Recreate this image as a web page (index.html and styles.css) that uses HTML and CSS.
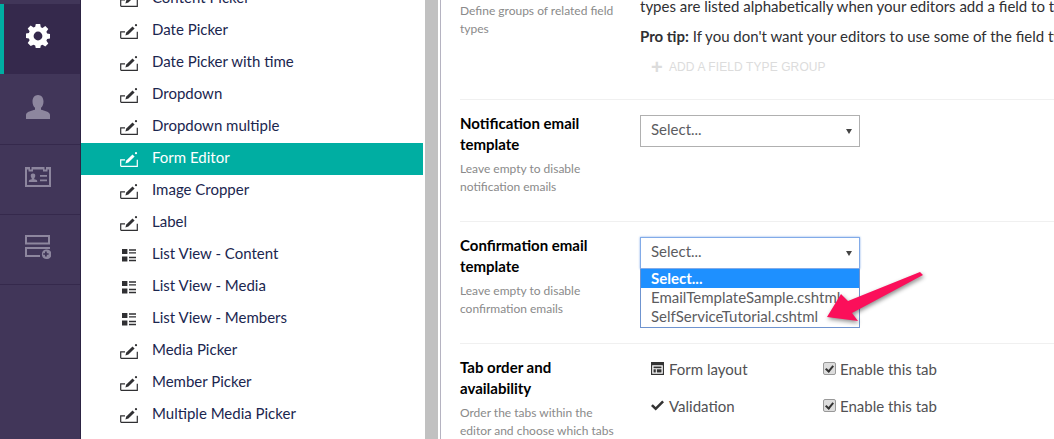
FILE: index.html
```html
<!DOCTYPE html>
<html lang="en">
<head>
    <meta charset="UTF-8">
    <title>Form Editor</title>
    <link rel="stylesheet" href="styles.css">
</head>
<body>
    <svg class="icon-defs" width="0" height="0">
        <symbol id="editor" viewBox="0 0 18 15">
            <path d="M.7 14.300V7.800H5M.7 14.300h16.600V7.800" fill="none" stroke="currentColor" stroke-width="1.200" />
            <path d="M5.400 11.400l.9-3 6.200-6 2.100 2.100-6.200 6z" fill="currentColor" />
            <circle cx="16" cy="1.200" r="1.100" fill="currentColor" />
        </symbol>
        <symbol id="listview" viewBox="0 0 14 13">
            <path d="M0 0h5.400v5H0zM0 7.500h5.400v5H0zM7 .3h7v1.400H7zM7 3.200h7v1.400H7zM7 7.800h7v1.400H7zM7 10.800h7v1.400H7z" fill="currentColor" />
        </symbol>
    </svg>

    <nav class="sections">
        <div class="section-item active">
            <svg class="section-icon" viewBox="0 0 24 24"><path fill-rule="evenodd" d="M9.800 0h4.400l.6 3.200 1.700.7L19.300 2l3 3.100-1.900 2.700.7 1.700 2.900.6v4.400l-2.900.6-.7 1.700 1.900 2.700-3 3-2.800-1.800-1.700.7-.6 3H9.800l-.6-3-1.700-.7L4.700 22l-3-3 1.900-2.700-.7-1.700-2.900-.6V9.600l2.900-.6.7-1.700-1.900-2.700 3-3.100 2.800 1.900 1.700-.7zM12 7.600a4.400 4.400 0 1 0 0 8.800 4.400 4.400 0 0 0 0-8.800z" /></svg>
        </div>
        <div class="section-item">
            <svg class="section-icon" viewBox="0 0 24 24"><path d="M12 0c3.300 0 5.500 2.800 5.500 6.500 0 2.700-1 5-2.500 6.300v2c3 .8 9 2 9 5.200V24H0v-4c0-3.200 6-4.400 9-5.200v-2C7.500 11.500 6.500 9.200 6.500 6.500 6.500 2.800 8.700 0 12 0z" /></svg>
        </div>
        <div class="section-item">
            <svg class="section-icon" viewBox="0 0 26 20"><path fill-rule="evenodd" d="M0 0h5v2.500h1.500V0h13v2.500H21V0h5v20H0zM2 2.500V18h22V2.500h-1.500v2H18v-2H8v2H3.500v-2z" /><path d="M8 6.500a2.200 2.200 0 0 1 2.200 2.600c0 1-.5 1.800-1 2.300v.8c1.300.3 3 .7 3 1.800v1H3.800v-1c0-1.100 1.700-1.500 3-1.800v-.8c-.5-.5-1-1.300-1-2.300A2.200 2.200 0 0 1 8 6.500zM15 8h7v1.800h-7zM15 12.500h7v1.800h-7z" /></svg>
        </div>
        <div class="section-item">
            <svg class="section-icon" viewBox="0 0 26 24"><path fill-rule="evenodd" d="M0 0h25v9.500H0zM2 2v5.500h21V2zM0 12h25v2H2v6h13v2H0z" /><path fill-rule="evenodd" d="M21 14.500a4.800 4.800 0 1 1 0 9.500 4.800 4.800 0 0 1 0-9.500zM20 16.500v1.800h-1.800v1.500H20v1.800h1.800v-1.800h1.800v-1.500h-1.800v-1.800z" /></svg>
        </div>
    </nav>

    <aside class="tree">
        <ul class="tree-list">
            <li class="tree-row"><svg class="tree-icon"><use href="#editor" /></svg>Content Picker</li>
            <li class="tree-row"><svg class="tree-icon"><use href="#editor" /></svg>Date Picker</li>
            <li class="tree-row"><svg class="tree-icon"><use href="#editor" /></svg>Date Picker with time</li>
            <li class="tree-row"><svg class="tree-icon"><use href="#editor" /></svg>Dropdown</li>
            <li class="tree-row"><svg class="tree-icon"><use href="#editor" /></svg>Dropdown multiple</li>
            <li class="tree-row selected"><svg class="tree-icon"><use href="#editor" /></svg>Form Editor</li>
            <li class="tree-row"><svg class="tree-icon"><use href="#editor" /></svg>Image Cropper</li>
            <li class="tree-row"><svg class="tree-icon"><use href="#editor" /></svg>Label</li>
            <li class="tree-row"><svg class="tree-icon small"><use href="#listview" /></svg>List View - Content</li>
            <li class="tree-row"><svg class="tree-icon small"><use href="#listview" /></svg>List View - Media</li>
            <li class="tree-row"><svg class="tree-icon small"><use href="#listview" /></svg>List View - Members</li>
            <li class="tree-row"><svg class="tree-icon"><use href="#editor" /></svg>Media Picker</li>
            <li class="tree-row"><svg class="tree-icon"><use href="#editor" /></svg>Member Picker</li>
            <li class="tree-row"><svg class="tree-icon"><use href="#editor" /></svg>Multiple Media Picker</li>
        </ul>
    </aside>

    <div class="splitter"></div>

    <main class="editor">
        <section class="prop first">
            <div class="prop-label">
                <p class="prop-desc">Define groups of related field types</p>
            </div>
            <div class="prop-field">
                <p class="copy">types are listed alphabetically when your editors add a field to the form.</p>
                <p class="copy tip"><strong>Pro tip:</strong> If you don't want your editors to use some of the field types, put them in a group.</p>
                <div class="add-group"><span class="add-plus">+</span>ADD A FIELD TYPE GROUP</div>
            </div>
        </section>

        <section class="prop">
            <div class="prop-label">
                <h4>Notification email template</h4>
                <p class="prop-desc">Leave empty to disable notification emails</p>
            </div>
            <div class="prop-field">
                <div class="select-box"><span>Select...</span><i class="caret"></i></div>
            </div>
        </section>

        <section class="prop">
            <div class="prop-label">
                <h4>Confirmation email template</h4>
                <p class="prop-desc">Leave empty to disable confirmation emails</p>
            </div>
            <div class="prop-field">
                <div class="select-box focused"><span>Select...</span><i class="caret"></i></div>
                <ul class="select-menu">
                    <li class="highlight">Select...</li>
                    <li>EmailTemplateSample.cshtml</li>
                    <li>SelfServiceTutorial.cshtml</li>
                </ul>
            </div>
        </section>

        <section class="prop">
            <div class="prop-label">
                <h4>Tab order and availability</h4>
                <p class="prop-desc">Order the tabs within the editor and choose which tabs</p>
            </div>
            <div class="prop-field tabs">
                <div class="tab-row">
                    <div class="tab-name">
                        <svg class="tab-icon" viewBox="0 0 13 13"><path fill-rule="evenodd" d="M0 0h13v13H0zM1.200 3.300v8.500h10.600V3.300zM2.500 4.500h8v1.800h-8zM2.500 7.300h2.300v3.200H2.500zM5.800 7.300h4.700v3.200H5.800z" /></svg>
                        Form layout
                    </div>
                    <label class="tab-check"><span class="checkbox"></span>Enable this tab</label>
                </div>
                <div class="tab-row">
                    <div class="tab-name">
                        <svg class="tab-icon" viewBox="0 0 13 13"><path d="M0 7l1.800-1.800 2.900 2.900L11.200 1.500 13 3.300 4.700 11.600z" /></svg>
                        Validation
                    </div>
                    <label class="tab-check"><span class="checkbox"></span>Enable this tab</label>
                </div>
                <div class="tab-row last">
                    <div class="tab-name">
                        <svg class="tab-icon" viewBox="0 0 13 13"><circle cx="6.500" cy="6.500" r="5" /></svg>
                        Actions
                    </div>
                    <label class="tab-check"><span class="checkbox"></span>Enable this tab</label>
                </div>
            </div>
        </section>
    </main>

    <svg class="callout" viewBox="0 0 1054 439" width="1054" height="439">
        <polygon points="920,272 923,275 852,313 858,321 827,317 841,294 848,301" />
    </svg>
</body>
</html>
```

FILE: styles.css
```css
/* page */
html, body {
    margin: 0;
    padding: 0;
}

body {
    display: flex;
    height: 439px;
    overflow: hidden;
    position: relative;
    background-color: white;
    font-family: Lato, sans-serif;
    font-size: 15px;
    color: #303033;
}

.icon-defs {
    position: absolute;
}

ul {
    list-style: none;
    margin: 0;
    padding: 0;
}

/* left section bar */
.sections {
    flex: 0 0 80px;
    background-color: #413659;
    border-right: 1px solid #2d2444;
    padding-top: 4px;
}

.section-item {
    height: 63px;
    padding: 0 4px 6px 0;
    border-bottom: 1px solid #35294c;
    display: flex;
    align-items: center;
    justify-content: center;
    color: #8d869e;
}

.section-item.active {
    height: 64px;
    border-bottom: none;
    border-left: 4px solid #00aea2;
    background-color: #35294c;
    color: white;
    padding-right: 8px;
    margin-bottom: 1px;
}

.section-icon {
    width: 26px;
    height: 24px;
    fill: currentColor;
}

/* tree of field types */
.tree {
    flex: 0 0 342px;
    overflow: hidden;
}

.tree-list {
    margin-top: -17px;
}

.tree-row {
    height: 32px;
    box-sizing: border-box;
    display: flex;
    align-items: center;
    padding: 0 0 4px 39px;
    color: #1b264f;
}

.tree-row.selected {
    background-color: #00aea2;
    color: white;
}

.tree-icon {
    width: 18px;
    height: 15px;
    margin-right: 14px;
    margin-top: 4px;
    color: #303033;
}

.tree-icon.small {
    width: 14px;
    height: 13px;
    margin-left: 2px;
    margin-right: 16px;
}

.selected .tree-icon {
    color: white;
}

/* grey bar between tree and editor */
.splitter {
    flex: 0 0 13px;
    margin: 0 2px;
    background-color: #c1c1c1;
}

/* editor panel */
.editor {
    flex: 1;
    min-width: 0;
    border-left: 1px solid #b5b3c1;
    padding-left: 19px;
}

.prop {
    display: flex;
    gap: 20px;
    height: 122px;
    box-sizing: border-box;
    padding-top: 13px;
    border-bottom: 1px solid #f0f0f0;
}

.prop.first {
    height: 100px;
    padding-top: 0;
}

.prop:last-child {
    border-bottom: none;
}

.prop-label {
    flex: 0 0 160px;
}

.prop-label h4 {
    margin: 0 0 5px;
    font-size: 15px;
    line-height: 21px;
    font-weight: 700;
    color: #000;
}

.prop-desc {
    margin: 0;
    font-size: 12px;
    line-height: 18px;
    color: #8a8a8a;
}

.first .prop-desc {
    margin-top: 2px;
}

.prop-field {
    flex: 1;
    min-width: 0;
    position: relative;
}

.copy {
    margin: 0;
    white-space: nowrap;
    line-height: 21px;
}

.first .copy:first-child {
    margin-top: -4px;
}

.tip {
    margin-top: 9px;
}

.add-group {
    display: flex;
    align-items: center;
    height: 18px;
    margin-top: 11px;
    padding-left: 11px;
    font-family: "Liberation Sans", sans-serif;
    font-size: 12px;
    letter-spacing: 0.1px;
    color: #dcdcdc;
}

.add-plus {
    width: 18px;
    font-size: 20px;
    font-weight: 700;
    line-height: 18px;
}

/* fake selects */
.select-box {
    width: 220px;
    height: 32px;
    margin-top: 2px;
    box-sizing: border-box;
    border: 1px solid #b0b0b0;
    padding: 0 7px 4px 10px;
    display: flex;
    align-items: center;
    justify-content: space-between;
    color: #5c5c5f;
}

.select-box.focused {
    border-color: #82abe8;
    box-shadow: 0 0 2px #82abe8;
}

.caret {
    width: 0;
    height: 0;
    margin-top: 4px;
    border-left: 3px solid transparent;
    border-right: 3px solid transparent;
    border-top: 5px solid #444;
}

.select-menu {
    position: absolute;
    top: 34px;
    left: 0;
    z-index: 2;
    width: 220px;
    height: 59px;
    box-sizing: border-box;
    border: 1px solid #6f94cf;
    border-top: none;
    background-color: white;
    color: #5c5c5f;
    overflow: hidden;
}

.select-menu li {
    height: 19px;
    line-height: 19px;
    padding-left: 10px;
    white-space: nowrap;
}

.select-menu .highlight {
    background-color: #1e90ff;
    color: white;
    font-weight: 700;
}

/* tab list */
.tabs {
    margin-top: -7px;
}

.tab-row {
    display: flex;
    height: 37px;
    padding-left: 11px;
    align-items: center;
    color: #515154;
}

.tab-row.last {
    margin-top: 3px;
}

.tab-name {
    flex: 0 0 172px;
    display: flex;
    align-items: center;
}

.tab-icon {
    width: 13px;
    height: 13px;
    margin-right: 5px;
    fill: #333;
}

.tab-check {
    display: flex;
    align-items: center;
}

.checkbox {
    width: 11px;
    height: 11px;
    border: 1px solid #999;
    border-radius: 2px;
    background-color: #ddd;
    margin-right: 4px;
    position: relative;
}

.checkbox::after {
    content: "";
    position: absolute;
    left: 3px;
    top: 1px;
    width: 3px;
    height: 6px;
    border-right: 2px solid #333;
    border-bottom: 2px solid #333;
    transform: rotate(40deg);
}

/* arrow drawn over the page */
.callout {
    position: absolute;
    left: 0;
    top: 0;
    z-index: 5;
    pointer-events: none;
    fill: #fb0f5a;
    filter: drop-shadow(1px 2px 2px rgba(0, 0, 0, 0.45));
}
```
